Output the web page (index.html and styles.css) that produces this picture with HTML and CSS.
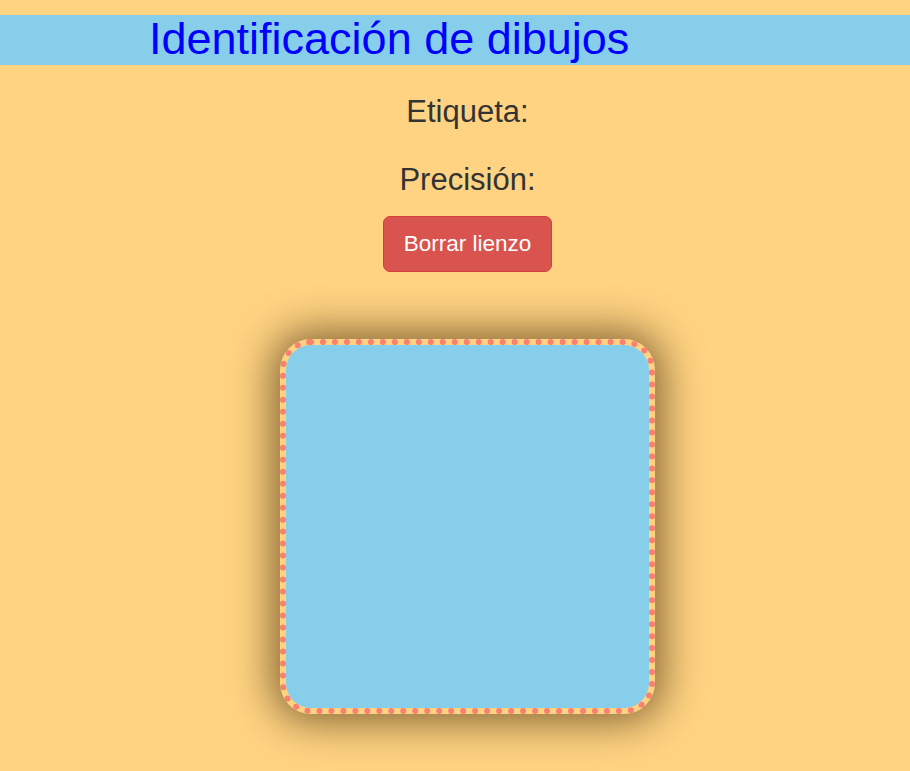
FILE: index.html
```html
<!DOCTYPE html>
<html lang="es">
<head>
<meta charset="utf-8">
<title>Identificación de dibujos</title>
<link rel="stylesheet" href="styles.css">
</head>
<body>
<h1 class="title">Identificación de dibujos</h1>
<main class="main">
  <h3 class="label">Etiqueta:</h3>
  <h3 class="label label-second">Precisión:</h3>
  <button class="btn-clear" type="button">Borrar lienzo</button>
  <div class="frame">
    <div class="canvas"></div>
  </div>
</main>
</body>
</html>
```
FILE: styles.css
```css
html, body {
  margin: 0;
  padding: 0;
}
body {
  background: #ffd382;
  font-family: "Liberation Sans", Arial, sans-serif;
  color: #333;
  min-height: 771px;
}
.title {
  margin: 15px 0 0 0;
  height: 50px;
  box-sizing: border-box;
  padding: 0 0 3px 149px;
  line-height: 47px;
  font-size: 45px;
  font-weight: normal;
  color: #0000ff;
  background: #87ceeb;
}
.main {
  display: flex;
  flex-direction: column;
  align-items: center;
  padding-left: 25px;
}
.label {
  margin: 30px 0 0 0;
  font-size: 31px;
  line-height: 33px;
  font-weight: normal;
  color: #333;
}
.label-second {
  margin-top: 35px;
}
.btn-clear {
  margin-top: 20px;
  height: 56px;
  box-sizing: border-box;
  padding: 0 20px;
  line-height: 54px;
  font-family: "Liberation Sans", Arial, sans-serif;
  font-size: 22.5px;
  color: #fff;
  background: #d9534f;
  border: 1px solid #d43f3a;
  border-radius: 7px;
  cursor: pointer;
}
.frame {
  margin-top: 67px;
  border: 6px dotted #fa8072;
  border-radius: 31px;
  background: #ffd382;
  box-shadow: 0 0 40px 8px rgba(50, 30, 0, 0.6);
}
.canvas {
  width: 363px;
  height: 363px;
  border-radius: 25px;
  background: #87ceeb;
}
```
